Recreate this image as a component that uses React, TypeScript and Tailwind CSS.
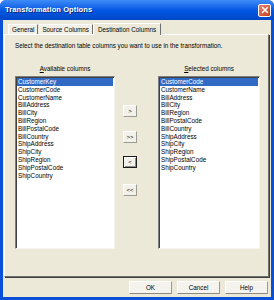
import { X } from 'lucide-react'

const available = [
  'CustomerKey',
  'CustomerCode',
  'CustomerName',
  'BillAddress',
  'BillCity',
  'BillRegion',
  'BillPostalCode',
  'BillCountry',
  'ShipAddress',
  'ShipCity',
  'ShipRegion',
  'ShipPostalCode',
  'ShipCountry',
]

const selected = available.slice(1)

function ListBox({ items, width }: { items: string[]; width: string }) {
  return (
    <div
      className={`${width} h-[173px] bg-white border border-t-[#7F7F7F] border-l-[#7F7F7F] border-r-[#F5F4EE] border-b-[#F5F4EE] shadow-[inset_1px_1px_0_#404040]`}
    >
      <div className="pt-[1px] pl-[1px] pr-[1px]">
        {items.map((item, i) => (
          <div
            key={item}
            className={`h-[7.8px] leading-[7.8px] pl-[1px] whitespace-nowrap ${
              i === 0 ? 'bg-[#316AC5] text-white' : 'text-black'
            }`}
          >
            {item}
          </div>
        ))}
      </div>
    </div>
  )
}

function SmallButton({ label, focused = false }: { label: string; focused?: boolean }) {
  return (
    <div
      className={`w-[14px] h-[12px] flex items-center justify-center text-[6px] leading-none bg-[#F2F1EA] border ${
        focused
          ? 'border-[#1C1C1C] shadow-[inset_1px_1px_0_#FFFFFF,inset_-1px_-1px_0_#8A8A8A]'
          : 'border-t-[#FFFFFF] border-l-[#FFFFFF] border-r-[#9A9A90] border-b-[#9A9A90]'
      }`}
    >
      {label}
    </div>
  )
}

function DialogButton({ label }: { label: string }) {
  return (
    <div className="w-[43px] h-[13px] flex items-center justify-center bg-[#F4F3EE] border border-t-white border-l-white border-r-[#9A9A90] border-b-[#8A8A80] text-[6.3px]">
      {label}
    </div>
  )
}

export default function App() {
  return (
    <div
      className="w-[274px] h-[300px] flex flex-col bg-[#0A4FD8] rounded-t-[6px] overflow-hidden text-black"
      style={{ fontFamily: '"Liberation Sans", Arial, sans-serif' }}
    >
      {/* title bar */}
      <div className="h-[20px] flex items-center justify-between pl-[5px] pr-[3px] bg-gradient-to-b from-[#3E8CF7] via-[#0458E4] to-[#0047C8]">
        <span className="text-white font-bold text-[7.5px] tracking-[0.1px] [text-shadow:1px_1px_0_#0A2A7A]">
          Transformation Options
        </span>
        <div className="w-[13px] h-[13px] rounded-[2px] border border-white bg-gradient-to-br from-[#E8816B] to-[#C8391B] flex items-center justify-center">
          <X className="w-[10px] h-[10px] text-white" strokeWidth={3.5} />
        </div>
      </div>

      {/* body */}
      <div className="flex-1 mx-[3px] mb-[3px] bg-[#ECE9D8] flex flex-col text-[6.3px]">
        {/* tabs */}
        <div className="flex items-end h-[13px] pl-[5px] mt-[1px]">
          <div className="h-[10px] px-[3px] flex items-center bg-[#F1EFE6] border-t border-l border-white border-r border-r-[#6F6F6F]">
            General
          </div>
          <div className="h-[10px] px-[3px] flex items-center bg-[#F1EFE6] border-t border-white border-r border-r-[#6F6F6F] ml-[1px]">
            Source Columns
          </div>
          <div className="h-[12px] px-[4px] mb-[-1px] relative z-10 flex items-center bg-[#ECE9D8] border-t border-l border-white border-r border-r-[#6F6F6F]">
            Destination Columns
          </div>
        </div>

        {/* panel */}
        <div className="ml-[1px] mr-[2px] h-[243px] border border-t-white border-l-white border-r-[#6F6F6F] border-b-[#6F6F6F] shadow-[1px_1px_0_#404040]">
          <div className="pl-[10px] pt-[7px] h-[8px] leading-[8px]">
            Select the destination table columns you want to use in the transformation.
          </div>

          <div className="flex pl-[10px] mt-[22px]">
            <div className="w-[100px] flex flex-col">
              <div className="text-center h-[11px] leading-[8px]">
                <span className="underline">A</span>vailable columns
              </div>
              <ListBox items={available} width="w-[100px]" />
            </div>

            <div className="w-[14px] ml-[8px] flex flex-col pt-[40px]">
              <SmallButton label=">" />
              <div className="h-[14px]" />
              <SmallButton label=">>" />
              <div className="h-[13px]" />
              <SmallButton label="<" focused />
              <div className="h-[16px]" />
              <SmallButton label="<<" />
            </div>

            <div className="w-[102px] ml-[21px] flex flex-col">
              <div className="text-center h-[11px] leading-[8px]">
                <span className="underline">S</span>elected columns
              </div>
              <ListBox items={selected} width="w-[102px]" />
            </div>
          </div>
        </div>

        {/* footer buttons */}
        <div className="flex justify-end gap-[5px] pr-[3px] mt-[4px]">
          <DialogButton label="OK" />
          <DialogButton label="Cancel" />
          <DialogButton label="Help" />
        </div>
      </div>
    </div>
  )
}
